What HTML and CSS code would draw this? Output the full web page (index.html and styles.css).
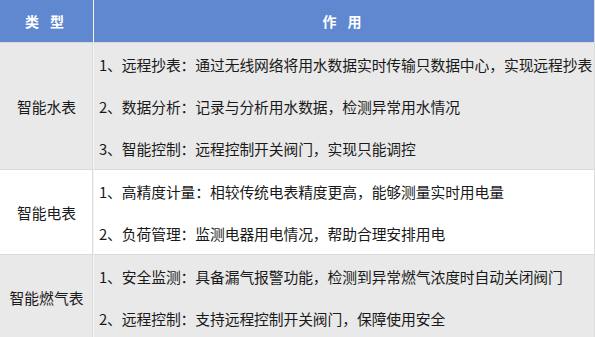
FILE: index.html
```html
<!DOCTYPE html>
<html lang="zh">
<head>
<meta charset="utf-8">
<link rel="stylesheet" href="styles.css">
</head>
<body>
<div class="table">
  <div class="head type">类 型</div>
  <div class="head use">作 用</div>

  <div class="cell name gray r3">智能水表</div>
  <div class="cell desc gray r3">
    <div class="line">1、远程抄表：通过无线网络将用水数据实时传输只数据中心，实现远程抄表</div>
    <div class="line">2、数据分析：记录与分析用水数据，检测异常用水情况</div>
    <div class="line">3、智能控制：远程控制开关阀门，实现只能调控</div>
  </div>

  <div class="cell name white">智能电表</div>
  <div class="cell desc white">
    <div class="line">1、高精度计量：相较传统电表精度更高，能够测量实时用电量</div>
    <div class="line">2、负荷管理：监测电器用电情况，帮助合理安排用电</div>
  </div>

  <div class="cell name gray">智能燃气表</div>
  <div class="cell desc gray">
    <div class="line">1、安全监测：具备漏气报警功能，检测到异常燃气浓度时自动关闭阀门</div>
    <div class="line">2、远程控制：支持远程控制开关阀门，保障使用安全</div>
  </div>
</div>
</body>
</html>
```

FILE: styles.css
```css
html, body {
  margin: 0;
  padding: 0;
  background: #ffffff;
}
body {
  font-family: "Noto Sans CJK SC", "Noto Sans", sans-serif;
  color: #1a1a1a;
  font-size: 14.8px;
}
.table {
  width: 594px;
  display: grid;
  grid-template-columns: 94px 500px;
  border-right: 1px solid #dcdcdc;
}
.head {
  height: 42px;
  background: #6088d1;
  color: #ffffff;
  font-weight: bold;
  font-size: 14px;
  display: flex;
  align-items: center;
  justify-content: center;
  letter-spacing: 4px;
}
.head.type {
  border-right: 1px solid #f4f4f4;
}
.cell {
  border-top: 1px solid #dadada;
}
.name {
  display: flex;
  align-items: center;
  justify-content: center;
  border-right: 1px solid #f4f4f4;
  box-shadow: inset -1px 0 0 #dcdcdc;
}
.desc {
  padding-left: 5px;
  overflow: hidden;
}
.gray {
  background: #e9e9e9;
}
.white {
  background: #ffffff;
}
.line {
  height: 42px;
  display: flex;
  align-items: center;
  white-space: nowrap;
  letter-spacing: -0.1px;
}
```
